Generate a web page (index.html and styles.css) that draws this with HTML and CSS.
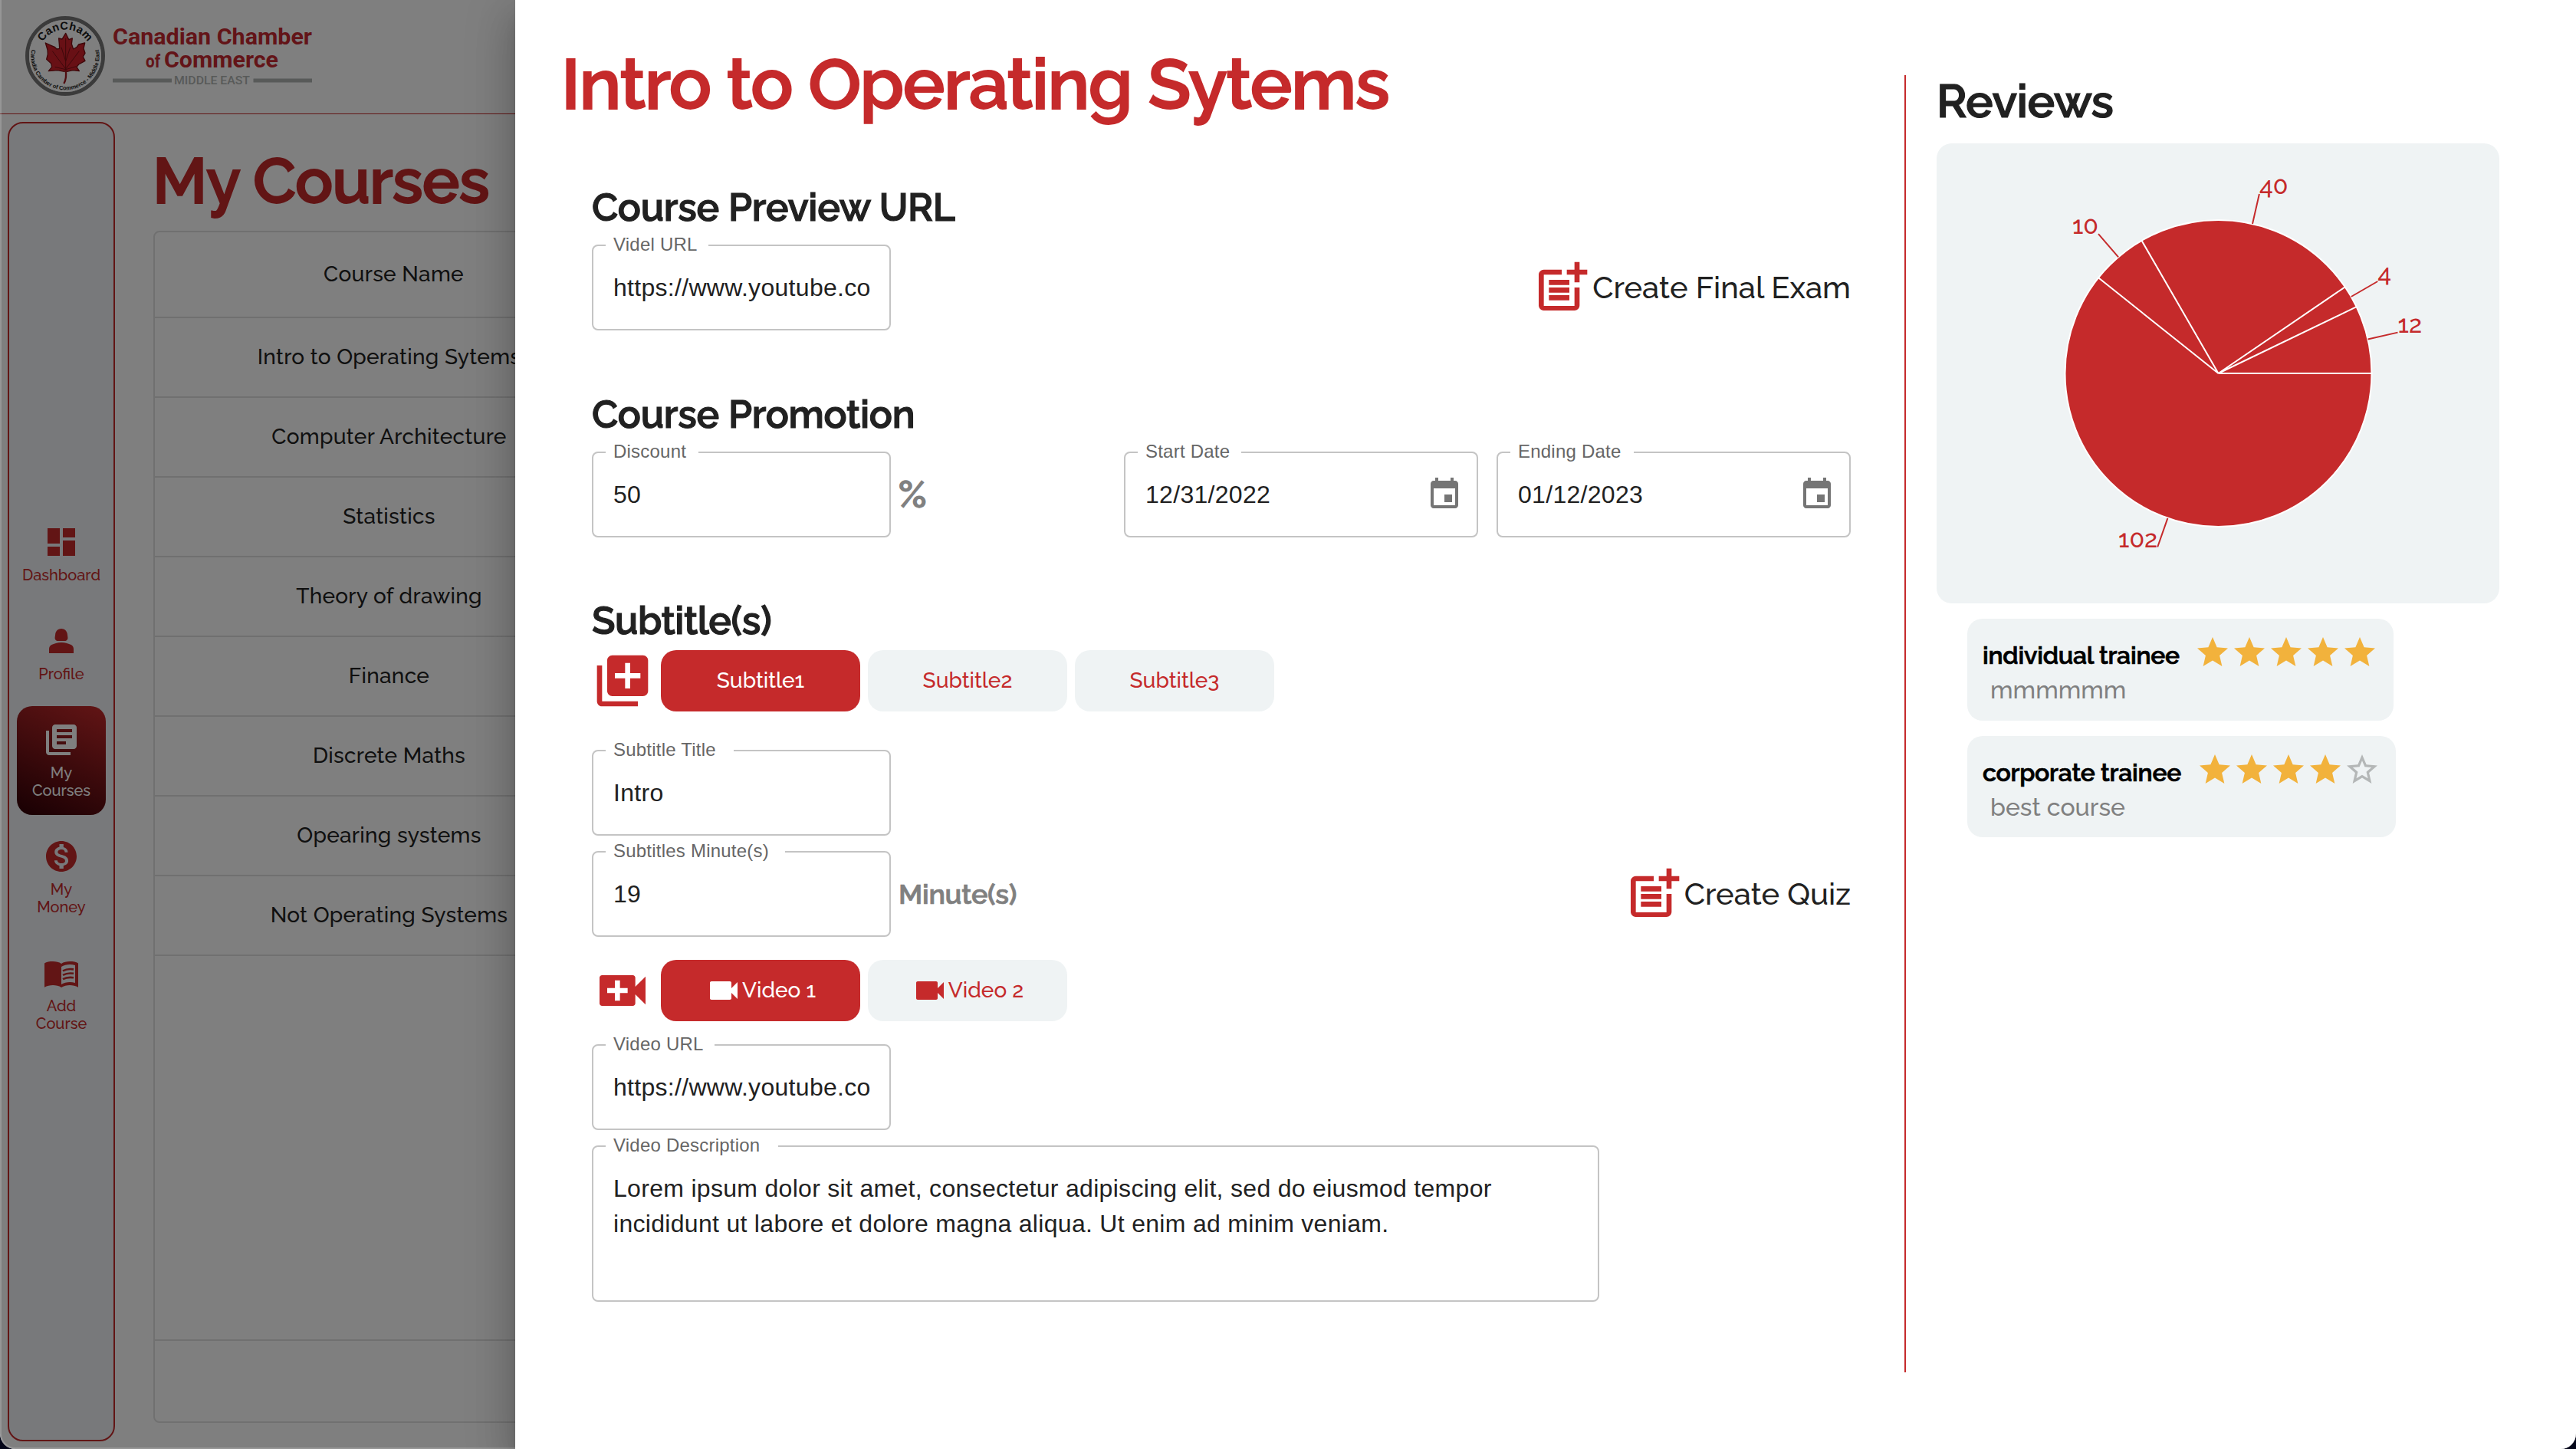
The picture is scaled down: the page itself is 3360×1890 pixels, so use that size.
FILE: index.html
```html
<!DOCTYPE html>
<html lang="en">
<head>
<meta charset="utf-8">
<title>My Courses</title>
<link rel="stylesheet" href="styles.css">
</head>
<body>
<svg class="sprite" aria-hidden="true">
  <symbol id="i-postadd" viewBox="0 0 24 24"><path d="M17 19.22H5V7h7V5H5c-1.100 0-2 .9-2 2v12c0 1.100.9 2 2 2h12c1.100 0 2-.9 2-2v-7h-2v7.220z"/><path d="M19 2h-2v3h-3v2h3v3h2V7h3V5h-3V2zM7 9h8v2H7zM7 12h8v2H7zM7 15h8v2H7z"/></symbol>
  <symbol id="i-calendar" viewBox="0 0 24 24"><path d="M17 12h-5v5h5v-5zM16 1v2H8V1H6v2H5c-1.110 0-1.990.9-1.990 2L3 19c0 1.100.89 2 2 2h14c1.100 0 2-.9 2-2V5c0-1.100-.9-2-2-2h-1V1h-2zm3 18H5V8h14v11z"/></symbol>
  <symbol id="i-videocam" viewBox="0 0 24 24"><path d="M17 10.500V7c0-.55-.45-1-1-1H4c-.55 0-1 .45-1 1v10c0 .55.45 1 1 1h12c.55 0 1-.45 1-1v-3.500l4 4v-11l-4 4z"/></symbol>
  <symbol id="i-star" viewBox="0 0 24 24"><path d="M12 17.270L18.180 21l-1.640-7.030L22 9.240l-7.190-.61L12 2 9.190 8.630 2 9.240l5.460 4.730L5.820 21z"/></symbol>
  <symbol id="i-star-empty" viewBox="0 0 24 24"><path d="M22 9.240l-7.190-.62L12 2 9.190 8.630 2 9.240l5.460 4.730L5.820 21 12 17.270 18.180 21l-1.630-7.030L22 9.240zM12 15.400l-3.760 2.270 1-4.280-3.320-2.880 4.380-.38L12 6.100l1.710 4.040 4.380.38-3.320 2.880 1 4.280L12 15.400z"/></symbol>
</svg>

<div class="window">
  <div class="app">
    <header class="topbar">
      <svg class="logo" viewBox="0 0 420 148">
        <defs>
          <path id="arc-top" d="M50.500 73A34.500 34.500 0 0 1 119.500 73"/>
          <path id="arc-bottom" d="M41.600 63A44.500 44.500 0 1 0 128.400 63"/>
        </defs>
        <circle cx="85" cy="73" r="49.500" class="seal"/>
        <circle cx="85" cy="73" r="47" class="seal-inner"/>
        <text class="seal-name" text-anchor="middle"><textPath href="#arc-top" startOffset="50%" textLength="70">CanCham</textPath></text>
        <text class="seal-sub" text-anchor="middle"><textPath href="#arc-bottom" startOffset="50%" textLength="156">Canadia Camber of Commerce - Middle East</textPath></text>
        <g transform="scale(.3333)">
          <path class="leaf" d="M257 130L269 155 283 150 280 172 287 192 300 185 308 174 332 168 327 190 333 208 325 222 333 238 308 252 300 262 310 278 285 275 262 280 257 276 252 280 225 275 190 278 203 262 200 248 182 232 187 212 186 195 178 168 200 178 214 184 222 192 233 190 232 172 230 150 243 153z"/>
          <path class="veins" d="M257 150V276M257 270L205 200M257 270L310 200M257 240L240 185M257 240L275 185M257 272L215 262M257 272L298 260"/>
          <path class="stem" d="M257 274Q262 305 250 327"/>
        </g>
        <text class="brand" x="147" y="58.300" font-size="29.500" textLength="260" lengthAdjust="spacingAndGlyphs">Canadian Chamber</text>
        <text class="brand" x="190" y="88" font-size="24" textLength="19" lengthAdjust="spacingAndGlyphs">of</text>
        <text class="brand" x="214" y="88" font-size="29.500" textLength="149" lengthAdjust="spacingAndGlyphs">Commerce</text>
        <text class="region" x="227" y="110" font-size="15" textLength="99" lengthAdjust="spacingAndGlyphs">MIDDLE EAST</text>
        <path class="rules" d="M147 105H224M330.500 105H407"/>
      </svg>
    </header>
    <div class="body">
      <nav class="sidebar">
        <a class="nav-item"><svg viewBox="0 0 24 24"><path d="M3 13h8V3H3v10zm0 8h8v-6H3v6zm10 0h8V11h-8v10zm0-18v6h8V3h-8z"/></svg><span>Dashboard</span></a>
        <a class="nav-item"><svg viewBox="0 0 24 24"><path d="M18.390 14.560C16.710 13.700 14.530 13 12 13s-4.710.7-6.390 1.560C4.610 15.070 4 16.100 4 17.220V20h16v-2.780c0-1.120-.61-2.150-1.610-2.660zM9.780 12h4.440c1.210 0 2.140-1.060 1.980-2.260l-.32-2.450C15.570 5.390 13.920 4 12 4S8.430 5.390 8.120 7.290L7.800 9.740c-.16 1.200.77 2.260 1.980 2.260z"/></svg><span>Profile</span></a>
        <a class="nav-item active"><svg viewBox="0 0 24 24"><path d="M4 6H2v14c0 1.100.9 2 2 2h14v-2H4V6zm16-4H8c-1.100 0-2 .9-2 2v12c0 1.100.9 2 2 2h12c1.100 0 2-.9 2-2V4c0-1.100-.9-2-2-2zm-1 5H9V5h10v2zm0 4H9V9h10v2zm-4 4H9v-2h6v2z" fill-rule="evenodd"/></svg><span>My<br>Courses</span></a>
        <a class="nav-item"><svg viewBox="0 0 24 24"><path d="M12 2C6.480 2 2 6.480 2 12s4.480 10 10 10 10-4.480 10-10S17.520 2 12 2zm1.410 16.090V20h-2.670v-1.930c-1.710-.36-3.160-1.460-3.270-3.400h1.960c.1 1.050.82 1.870 2.650 1.870 1.960 0 2.400-.98 2.400-1.590 0-.83-.44-1.610-2.670-2.140-2.480-.6-4.180-1.620-4.180-3.670 0-1.720 1.390-2.840 3.110-3.210V4h2.670v1.950c1.860.45 2.790 1.860 2.850 3.390H14.300c-.05-1.110-.64-1.870-2.220-1.870-1.500 0-2.400.68-2.400 1.640 0 .84.65 1.390 2.670 1.910s4.180 1.390 4.180 3.910c-.01 1.830-1.380 2.830-3.120 3.160z"/></svg><span>My<br>Money</span></a>
        <a class="nav-item"><svg viewBox="0 0 24 24"><path fill-rule="evenodd" d="M1 5.800C2.300 4.800 4.300 4.500 6.500 4.500 8.450 4.500 10.550 4.900 12 6c1.450-1.100 3.550-1.500 5.500-1.500 2.200 0 4.200.3 5.500 1.300V21.400c-1.600-1-3.600-1.400-5.500-1.400-1.700 0-4.150.65-5.500 1.500C10.550 20.400 8.450 20 6.500 20c-1.900 0-3.900.4-5.500 1.400zM12 8V19.500C13.350 18.650 15.800 18 17.500 18c1.200 0 2.400.15 3.500.5V7C19.900 6.650 18.700 6.500 17.500 6.500 15.800 6.500 13.350 7.150 12 8z"/><path class="lines" d="M13 10.700C15.200 9.500 17.500 9.300 20 9.700M13 13.400C15.200 12.200 17.500 12 20 12.400M13 16.100C15.200 14.900 17.500 14.700 20 15.100"/></svg><span>Add<br>Course</span></a>
      </nav>
      <main class="courses">
        <h1>My Courses</h1>
        <div class="table">
          <div class="row head"><span>Course Name</span></div>
          <div class="row"><span>Intro to Operating Sytems</span></div>
          <div class="row"><span>Computer Architecture</span></div>
          <div class="row"><span>Statistics</span></div>
          <div class="row"><span>Theory of drawing</span></div>
          <div class="row"><span>Finance</span></div>
          <div class="row"><span>Discrete Maths</span></div>
          <div class="row"><span>Opearing systems</span></div>
          <div class="row"><span>Not Operating Systems</span></div>
          <div class="foot"></div>
        </div>
      </main>
    </div>
  </div>
  <div class="backdrop"></div>

  <aside class="drawer">
    <section class="details">
      <h2>Intro to Operating Sytems</h2>
      <div class="form">
        <h3>Course Preview URL</h3>
        <div class="line after-url">
          <div class="field"><label class="n134">Videl URL</label><span>https://www.youtube.co</span></div>
          <div class="action final"><svg><use href="#i-postadd"/></svg><span>Create Final Exam</span></div>
        </div>
        <h3>Course Promotion</h3>
        <div class="line after-promo">
          <div class="with-unit">
            <div class="field"><label class="n121">Discount</label><span>50</span></div>
            <b class="unit percent">%</b>
          </div>
          <div class="dates">
            <div class="field date"><label class="n135">Start Date</label><span>12/31/2022</span><svg><use href="#i-calendar"/></svg></div>
            <div class="field date"><label class="n161">Ending Date</label><span>01/12/2023</span><svg><use href="#i-calendar"/></svg></div>
          </div>
        </div>
        <h3 class="tight">Subtitle(s)</h3>
        <div class="tabs after-subs">
          <svg class="add" viewBox="0 0 24 24"><path d="M4 6H2v14c0 1.100.9 2 2 2h14v-2H4V6zm16-4H8c-1.100 0-2 .9-2 2v12c0 1.100.9 2 2 2h12c1.100 0 2-.9 2-2V4c0-1.100-.9-2-2-2zm-1 9h-4v4h-2v-4H9V9h4V5h2v4h4v2z"/></svg>
          <button class="tab on">Subtitle1</button>
          <button class="tab">Subtitle2</button>
          <button class="tab">Subtitle3</button>
        </div>
        <div class="field after-title"><label class="n167">Subtitle Title</label><span>Intro</span></div>
        <div class="line after-minutes">
          <div class="with-unit">
            <div class="field"><label class="n234">Subtitles Minute(s)</label><span>19</span></div>
            <b class="unit">Minute(s)</b>
          </div>
          <div class="action quiz"><svg><use href="#i-postadd"/></svg><span>Create Quiz</span></div>
        </div>
        <div class="tabs after-videos">
          <svg class="add" viewBox="0 0 24 24"><path d="M17 10.500V7c0-.55-.45-1-1-1H4c-.55 0-1 .45-1 1v10c0 .55.45 1 1 1h12c.55 0 1-.45 1-1v-3.500l4 4v-11l-4 4zM14 13h-3v3H9v-3H6v-2h3V8h2v3h3v2z"/></svg>
          <button class="tab on"><svg><use href="#i-videocam"/></svg>Video 1</button>
          <button class="tab"><svg><use href="#i-videocam"/></svg>Video 2</button>
        </div>
        <div class="field after-link"><label class="n142">Video URL</label><span>https://www.youtube.co</span></div>
        <div class="field area"><label class="n225">Video Description</label><p>Lorem ipsum dolor sit amet, consectetur adipiscing elit, sed do eiusmod tempor incididunt ut labore et dolore magna aliqua. Ut enim ad minim veniam.</p></div>
      </div>
    </section>
    <section class="reviews">
      <h3>Reviews</h3>
      <div class="chart">
        <svg viewBox="-367.500 -300 734 600">
          <circle class="pie" r="200"/>
          <path class="cuts" d="M0 0H200M0 0L180.200 -86.800M0 0L165.200 -112.700M0 0L-100 -173.200M0 0L-156.400 -124.700"/>
          <path class="leads" d="M195 -44.500L234 -53.400M173.200 -100L207.800 -120M44.500 -195L53.400 -234M-130.400 -151.600L-156.500 -181.900M-66.100 188.800L-79.300 226.500"/>
          <text x="234" y="-53.400">12</text>
          <text x="207.800" y="-120">4</text>
          <text x="53.400" y="-234">40</text>
          <text x="-156.500" y="-181.900" text-anchor="end">10</text>
          <text x="-79.300" y="226.500" text-anchor="end">102</text>
        </svg>
      </div>
      <article class="review first">
        <div class="who"><b>individual trainee</b><div class="stars"><svg><use href="#i-star"/></svg><svg><use href="#i-star"/></svg><svg><use href="#i-star"/></svg><svg><use href="#i-star"/></svg><svg><use href="#i-star"/></svg></div></div>
        <p>mmmmmm</p>
      </article>
      <article class="review second">
        <div class="who"><b>corporate trainee</b><div class="stars"><svg><use href="#i-star"/></svg><svg><use href="#i-star"/></svg><svg><use href="#i-star"/></svg><svg><use href="#i-star"/></svg><svg class="empty"><use href="#i-star-empty"/></svg></div></div>
        <p>best course</p>
      </article>
    </section>
  </aside>
</div>
</body>
</html>
```
FILE: styles.css
```css
:root {
  --red: #c52a2b;
  --panel: #eff3f4;
  --ink: #212121;
}

* { box-sizing: border-box; margin: 0; padding: 0; }

html, body { height: 1890px; overflow: hidden; background: #04061a; }

body {
  font-family: Raleway, Lato, sans-serif;
  font-weight: 500;
  color: var(--ink);
}

svg { display: block; fill: currentColor; flex: none; }
.sprite { position: absolute; width: 0; height: 0; }

.window {
  position: relative;
  width: 3360px;
  height: 1890px;
  overflow: hidden;
  border-radius: 0 0 20px 20px;
  background: #fff;
}

/* Page behind the drawer */
.app { height: 1890px; }
.topbar { height: 149px; border-bottom: 1px solid var(--red); }
.logo { width: 420px; height: 148px; }
.seal { fill: none; stroke: #777; stroke-width: 5; }
.seal-inner { fill: #fff; }
.seal-name { font: bold 14.5px "Liberation Sans", sans-serif; fill: #1a1a1a; }
.seal-sub { font: bold 7.5px "Liberation Sans", sans-serif; fill: #222; }
.leaf { fill: #d0202a; stroke: #7a1015; stroke-width: 4; stroke-linejoin: round; }
.veins { fill: none; stroke: #7a1015; stroke-width: 3; }
.stem { fill: none; stroke: #a01820; stroke-width: 7; }
.brand { font-family: "Roboto", sans-serif; font-weight: 700; fill: #c62830; }
.region { font-family: "Roboto", sans-serif; font-weight: 500; fill: #b0b4b2; }
.rules { stroke: #b0b4b2; stroke-width: 5; fill: none; }

.body { display: flex; height: 1741px; padding: 10px 20px 10px 10px; gap: 50px; }
.sidebar {
  width: 140px;
  height: 1721px;
  border: 2px solid var(--red);
  border-radius: 20px;
  background: #f0f3f6;
  padding-top: 502px;
  display: flex;
  flex-direction: column;
  align-items: center;
  gap: 10px;
}
.nav-item {
  width: 116px;
  padding: 20px 0;
  display: flex;
  flex-direction: column;
  align-items: center;
  gap: 8px;
  border-radius: 20px;
  color: var(--red);
  font-size: 20px;
  line-height: 23px;
  text-align: center;
}
.nav-item svg { width: 48px; height: 48px; }
.nav-item.active { color: #fff; background: linear-gradient(25deg, #300006 0%, var(--red) 100%); }
.lines { fill: none; stroke: currentColor; stroke-width: 1.3; }

.courses { flex: 1; padding-top: 27px; }
.courses h1 {
  font-size: 82px;
  line-height: 100px;
  font-weight: 600;
  -webkit-text-stroke: 1.8px currentColor;
  color: var(--red);
  letter-spacing: -1.1px;
  margin-bottom: 15px;
  margin-left: -1px;
}
.table {
  height: 1555px;
  border: 2px solid #e0e0e0;
  border-radius: 8px;
  display: flex;
  flex-direction: column;
}
.row {
  height: 104px;
  border-bottom: 2px solid #e0e0e0;
  display: flex;
  align-items: center;
  padding-bottom: 1px;
}
.row span { width: 611px; text-align: center; font-size: 28px; letter-spacing: .3px; }
.row.head { height: 112px; padding: 0 0 1px 6px; }
.foot { margin-top: auto; height: 107px; border-top: 2px solid #e0e0e0; }

.backdrop {
  position: absolute;
  inset: 0;
  background: rgba(0, 0, 0, .5);
  border-left: 2px solid rgba(255, 255, 255, .18);
  border-bottom: 2px solid rgba(255, 255, 255, .18);
  border-radius: 0 0 0 20px;
}

/* Drawer */
.drawer {
  position: absolute;
  top: 0;
  right: 0;
  width: 2688px;
  height: 1890px;
  background: #fff;
  display: flex;
  box-shadow: 0 16px 20px -10px rgba(0, 0, 0, .2), 0 32px 48px 4px rgba(0, 0, 0, .14), 0 12px 60px 10px rgba(0, 0, 0, .12);
}
.details { width: 1742px; padding: 54px 0 0 60px; }
.details h2 {
  font-size: 92px;
  line-height: 112px;
  font-weight: 600;
  -webkit-text-stroke: 1.8px currentColor;
  color: var(--red);
  letter-spacing: -1.55px;
  white-space: nowrap;
  margin-left: 0;
}
.form { padding: 75px 0 0 40px; }
.form h3 {
  font-size: 50px;
  line-height: 60px;
  font-weight: 600;
  -webkit-text-stroke: 1.1px currentColor;
  letter-spacing: -.3px;
  margin-bottom: 18px;
}
.form h3.tight { margin-bottom: 8px; letter-spacing: -.5px; }
.line { display: flex; justify-content: space-between; align-items: center; height: 112px; }
.after-url { margin: 18px 0 80px; }
.after-promo { margin-bottom: 79px; }
.after-subs { margin-bottom: 50px; }
.form .after-title { margin-bottom: 20px; }
.after-minutes { margin-bottom: 30px; }
.after-videos { margin-bottom: 30px; }
.form .after-link { margin-bottom: 20px; }

.field {
  position: relative;
  width: 390px;
  height: 112px;
  border: 2px solid #c4c4c4;
  border-radius: 8px;
  padding: 0 18px 0 26px;
  display: flex;
  align-items: center;
  justify-content: space-between;
  font: 32px/46px "Liberation Sans", Arial, sans-serif;
  letter-spacing: .3px;
}
.field label {
  position: absolute;
  left: 16px;
  top: -16px;
  padding-left: 10px;
  background: #fff;
  color: #666;
  font-size: 24px;
  line-height: 28px;
  letter-spacing: .22px;
  white-space: nowrap;
}
.n121 { width: 121px; }
.n134 { width: 134px; }
.n135 { width: 135px; }
.n142 { width: 142px; }
.n161 { width: 161px; }
.n167 { width: 167px; }
.n225 { width: 225px; }
.n234 { width: 234px; }
.field.date { width: 462px; }
.field.date svg { width: 48px; height: 48px; color: #757575; }
.field.area { width: 1314px; height: 204px; align-items: flex-start; padding: 31px 26px; }
.dates { display: flex; gap: 24px; }

.with-unit { display: flex; align-items: center; gap: 10px; }
.unit {
  color: #808080;
  font-size: 36px;
  line-height: 44px;
  font-weight: 600;
  -webkit-text-stroke: .7px currentColor;
  letter-spacing: -.3px;
}
.percent { font-size: 48px; -webkit-text-stroke-width: 1.4px; }

.action { display: flex; align-items: center; font-size: 40px; line-height: 48px; }
.action svg { width: 80px; height: 80px; color: var(--red); }

.tabs { display: flex; align-items: center; gap: 10px; height: 80px; }
.tabs .add { width: 80px; height: 80px; color: var(--red); }
.tab {
  width: 260px;
  height: 80px;
  border: 0;
  border-radius: 20px;
  background: var(--panel);
  color: var(--red);
  font: inherit;
  font-size: 28px;
  padding-bottom: 1px;
  display: flex;
  align-items: center;
  justify-content: center;
}
.tab svg { width: 48px; height: 48px; }
.tab.on { background: var(--red); color: #fff; }

/* Reviews */
.reviews {
  margin-top: 98px;
  margin-left: 70px;
  height: 1692px;
  width: 776px;
  border-left: 2px solid var(--red);
  padding-left: 40px;
}
.reviews h3 {
  font-size: 60px;
  line-height: 70px;
  font-weight: 600;
  -webkit-text-stroke: 1.2px currentColor;
  letter-spacing: -.5px;
  margin: -1px 0 20px;
}
.chart { width: 734px; height: 600px; border-radius: 20px; background: var(--panel); margin-bottom: 20px; }
.chart svg { width: 734px; height: 600px; }
.chart text { font-size: 32px; fill: var(--red); }
.pie { fill: var(--red); stroke: #fff; stroke-width: 2; }
.cuts { stroke: #fff; stroke-width: 2; }
.leads { stroke: var(--red); stroke-width: 2; }

.review {
  margin: 0 0 20px 40px;
  height: 133px;
  border-radius: 20px;
  background: var(--panel);
  padding: 20px 20px 0 20px;
  font-size: 32px;
  line-height: 40px;
}
.first { width: 556px; }
.second { width: 559px; height: 132px; }
.who { display: flex; justify-content: space-between; color: #000; height: 53px; }
.who b {
  padding-top: 8px;
  font-weight: 600;
  -webkit-text-stroke: .7px currentColor;
  letter-spacing: -.25px;
  white-space: nowrap;
}
.stars { display: flex; color: #f2b23c; }
.stars svg { width: 48px; height: 48px; }
.stars .empty { color: #b4b7b7; }
.review p { padding-left: 10px; color: #808080; }
```
